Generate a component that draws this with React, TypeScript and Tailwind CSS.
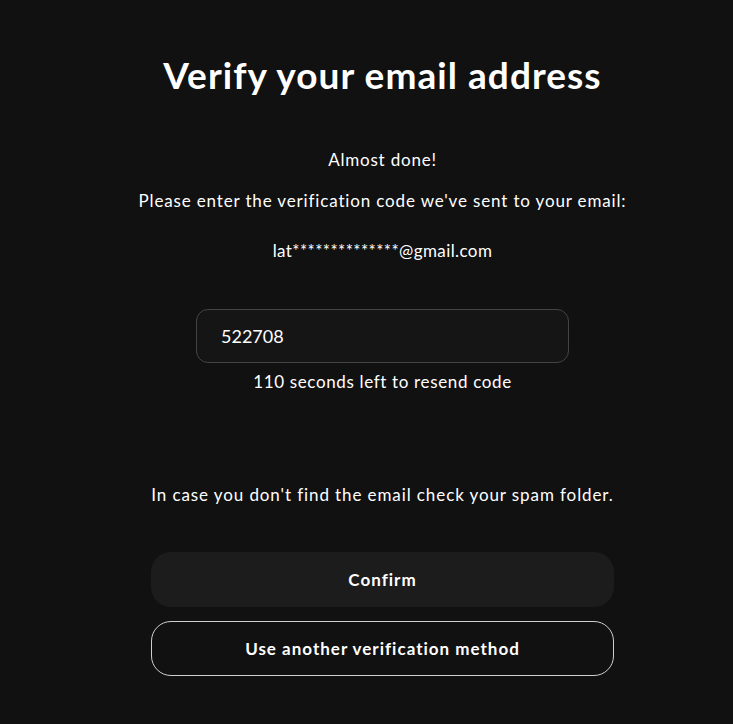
import React from "react";

export default function App() {
  return (
    <div
      className="min-h-[724px] w-full bg-[#111111] text-white"
      style={{ fontFamily: '"Lato", "Noto Sans", sans-serif' }}
    >
      <div className="flex w-full flex-col items-center pl-[32px]">
        <h1 className="mt-[52px] text-[37px] font-bold leading-[46px] tracking-[1.05px]">
          Verify your email address
        </h1>
        <p className="mt-[50px] text-[17px] leading-[24px] tracking-[0.8px]">Almost done!</p>
        <p className="mt-[17px] text-[17px] leading-[24px] tracking-[0.85px]">
          Please enter the verification code we've sent to your email:
        </p>
        <p className="mt-[26px] text-[17px] leading-[24px] tracking-[0.4px]">lat**************@gmail.com</p>
        <div className="mt-[46px] flex h-[54px] w-[373px] items-center rounded-[12px] border border-[#444444] bg-[#151515] px-[24px] text-[18px]">
          522708
        </div>
        <p className="mt-[7px] text-[17px] leading-[24px] tracking-[0.65px]">110 seconds left to resend code</p>
        <p className="mt-[89px] text-[17px] leading-[24px] tracking-[0.9px]">
          In case you don't find the email check your spam folder.
        </p>
        <button className="mt-[45px] flex h-[55px] w-[463px] items-center justify-center rounded-[20px] bg-[#1c1c1c] text-[17px] font-bold tracking-[1px] text-white">
          Confirm
        </button>
        <button className="mt-[14px] flex h-[55px] w-[463px] items-center justify-center rounded-[20px] border border-[#cfcfcf] text-[17px] font-bold tracking-[1px] text-white">
          Use another verification method
        </button>
      </div>
    </div>
  );
}
